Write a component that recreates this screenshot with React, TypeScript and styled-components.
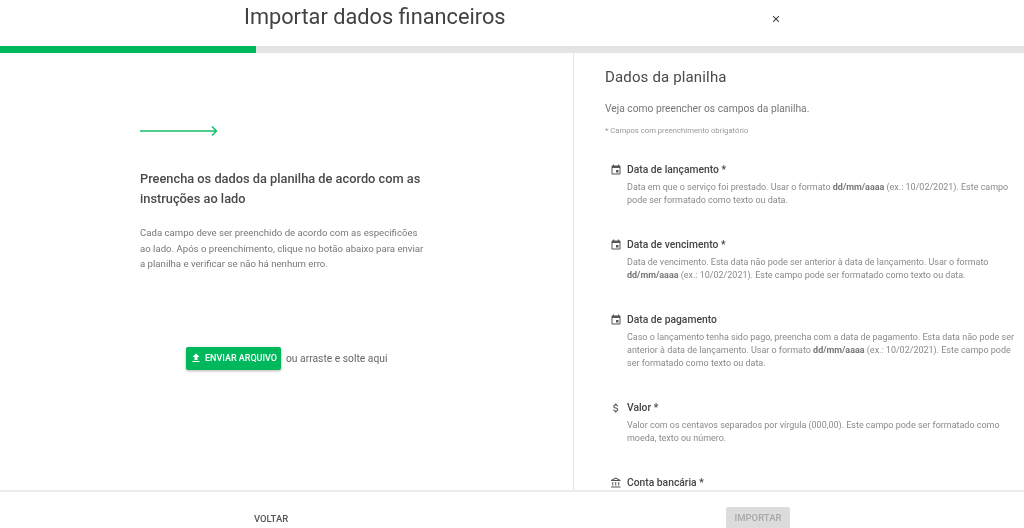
import React from 'react';
import styled, { createGlobalStyle } from 'styled-components';

const Global = createGlobalStyle`
  html, body { margin: 0; padding: 0; background: #fff; }
  body { font-family: Roboto, "Liberation Sans", sans-serif; overflow: hidden; }
  * { box-sizing: border-box; }
`;
const Page = styled.div`
  width: 1024px; height: 528px; display: flex; flex-direction: column; overflow: hidden; background: #fff;
  filter: blur(0.35px);
`;
const Header = styled.header`
  height: 46px; flex: none; display: flex; align-items: flex-start; padding-left: 244px;
`;
const Title = styled.h1`
  margin: 2px 0 0; width: 527px; font-size: 21.75px; line-height: 30px; font-weight: 400; color: #424242;
`;
const Close = styled.button`
  border: 0; background: none; padding: 0; width: 10px; height: 10px; margin-top: 14px; color: #444; display: flex;
`;
const Track = styled.div`
  height: 7px; flex: none; background: #e4e4e4;
`;
const Fill = styled.div<{ $pct: number }>`
  height: 100%; width: ${p => p.$pct}%; background: #00b85c;
`;
const Body = styled.main`
  flex: 1; min-height: 0; display: flex;
`;
const Left = styled.section`
  width: 574px; flex: none; border-right: 1px solid #e6e6e6; padding: 72px 0 0 140px;
`;
const Arrow = styled.svg`
  display: block; width: 78px; height: 12px; color: #19bd69;
`;
const Lead = styled.h2`
  margin: 32px 0 0; width: 290px; font-size: 12.82px; line-height: 20px; font-weight: 500; color: #4a4a4a;
`;
const Para = styled.p`
  margin: 16px 0 0; width: 290px; font-size: 9.62px; line-height: 15.5px; font-weight: 400; color: #777;
`;
const UploadRow = styled.div`
  display: flex; align-items: center; gap: 5px; margin: 75px 0 0 46px;
`;
const Upload = styled.button`
  width: 95px; height: 23px; border: 0; border-radius: 2px; background: #00b85c; color: #fff; display: flex; align-items: center; justify-content: center; gap: 3px;
  font: 500 9px/1 Roboto, sans-serif; box-shadow: 0 1px 3px rgba(0,0,0,.3); padding: 0;
`;
const Hint = styled.span`
  font-size: 10.3px; color: #666;
`;
const Right = styled.section`
  flex: 1; min-width: 0; padding: 14px 0 0 31px; overflow: hidden;
`;
const SheetTitle = styled.h2`
  margin: 0; font-size: 15px; line-height: 20px; font-weight: 400; color: #4a4a4a; letter-spacing: .15px;
`;
const Sub = styled.p`
  margin: 14px 0 0; font-size: 10.25px; line-height: 16px; color: #777;
`;
const Note = styled.p`
  margin: 8px 0 0; font-size: 7.7px; line-height: 12px; color: #999;
`;
const Fields = styled.div`
  margin-top: 25px; display: flex; flex-direction: column; gap: 30px; padding-left: 6px;
`;
const Field = styled.article`
  display: grid; grid-template-columns: 12px 1fr; column-gap: 4px; row-gap: 3px; width: 405px;
`;
const IconSlot = styled.svg`
  width: 12px; height: 12px; color: #555; align-self: center; margin-left: -1px;
`;
const FieldName = styled.h3`
  margin: 0; font-size: 10.3px; line-height: 16px; font-weight: 500; color: #444;
`;
const FieldText = styled.p`
  grid-column: 2; margin: 0; font-size: 8.97px; line-height: 13px; color: #8a8a8a;
  b { font-weight: 700; color: #777; }
`;
const Footer = styled.footer`
  height: 38px; flex: none; border-top: 2px solid #ececec; display: flex; align-items: center; padding: 0 0 0 254px; background: #fff;
`;
const Back = styled.button`
  border: 0; background: none; padding: 0; width: 472px; text-align: left; font: 500 9.5px/1 Roboto, sans-serif; color: #555; margin-top: 17px;
`;
const Import = styled.button`
  width: 64px; height: 22px; border: 0; border-radius: 2px; background: #dcdcdc; color: #a8a8a8; font: 500 9.5px/1 Roboto, sans-serif; padding: 0; margin-top: 15px;
`;

const paths = {
  event: 'M17 12h-5v5h5v-5zM16 1v2H8V1H6v2H5c-1.11 0-1.99.9-1.99 2L3 19c0 1.1.89 2 2 2h14c1.1 0 2-.9 2-2V5c0-1.1-.9-2-2-2h-1V1h-2zm3 18H5V8h14v11z',
  money: 'M11.8 10.9c-2.27-.59-3-1.2-3-2.15 0-1.09 1.01-1.85 2.7-1.85 1.78 0 2.44.85 2.5 2.1h2.21c-.07-1.72-1.12-3.3-3.21-3.81V3h-3v2.16c-1.94.42-3.5 1.68-3.5 3.61 0 2.31 1.91 3.46 4.7 4.13 2.5.6 3 1.48 3 2.41 0 .69-.49 1.79-2.7 1.79-2.06 0-2.87-.92-2.98-2.1h-2.2c.12 2.19 1.76 3.42 3.68 3.83V21h3v-2.15c1.95-.37 3.5-1.5 3.5-3.55 0-2.84-2.43-3.81-4.7-4.4z',
  bank: 'M6.5 10h-2v7h2v-7zm6 0h-2v7h2v-7zm8.5 9H2v2h19v-2zm-2.5-9h-2v7h2v-7zm-7-6.74L16.71 6H6.29l5.21-2.74m0-2.26L2 6v2h19V6l-9.5-5z',
};
const Icon = ({ d }: { d: string }) => (
  <IconSlot viewBox="0 0 24 24" fill="currentColor"><path d={d} /></IconSlot>
);
const F = 'dd/mm/aaaa';
const fields: { icon: string; name: string; text?: React.ReactNode }[] = [
  { icon: paths.event, name: 'Data de lançamento *', text: <>Data em que o serviço foi prestado. Usar o formato <b>{F}</b> (ex.: 10/02/2021). Este campo pode ser formatado como texto ou data.</> },
  { icon: paths.event, name: 'Data de vencimento *', text: <>Data de vencimento. Esta data não pode ser anterior à data de lançamento. Usar o formato <b>{F}</b> (ex.: 10/02/2021). Este campo pode ser formatado como texto ou data.</> },
  { icon: paths.event, name: 'Data de pagamento', text: <>Caso o lançamento tenha sido pago, preencha com a data de pagamento. Esta data não pode ser anterior à data de lançamento. Usar o formato <b>{F}</b> (ex.: 10/02/2021). Este campo pode ser formatado como texto ou data.</> },
  { icon: paths.money, name: 'Valor *', text: <>Valor com os centavos separados por vírgula (000,00). Este campo pode ser formatado como moeda, texto ou número.</> },
  { icon: paths.bank, name: 'Conta bancária *' },
];

export default function App() {
  return (
    <Page>
      <Global />
      <Header>
        <Title>Importar dados financeiros</Title>
        <Close aria-label="Fechar">
          <svg viewBox="0 0 24 24" width="10" height="10" fill="none" stroke="currentColor" strokeWidth="2.6"><path d="M5 5l14 14M19 5L5 19" /></svg>
        </Close>
      </Header>
      <Track><Fill $pct={25} /></Track>
      <Body>
        <Left>
          <Arrow viewBox="0 0 78 12" fill="none" stroke="currentColor" strokeWidth="1.5"><path d="M0 6h76.500M72 1.500l4.500 4.500-4.500 4.500" /></Arrow>
          <Lead>Preencha os dados da planilha de acordo com as instruções ao lado</Lead>
          <Para>Cada campo deve ser preenchido de acordo com as especificões ao lado. Após o preenchimento, clique no botão abaixo para enviar a planilha e verificar se não há nenhum erro.</Para>
          <UploadRow>
            <Upload>
              <svg viewBox="0 0 24 24" width="12" height="12" fill="currentColor"><path d="M5 20h14v-2H5v2zm0-10h4v6h6v-6h4l-7-7-7 7z" /></svg>
              ENVIAR ARQUIVO
            </Upload>
            <Hint>ou arraste e solte aqui</Hint>
          </UploadRow>
        </Left>
        <Right>
          <SheetTitle>Dados da planilha</SheetTitle>
          <Sub>Veja como preencher os campos da planilha.</Sub>
          <Note>* Campos com preenchimento obrigatório</Note>
          <Fields>
            {fields.map(f => (
              <Field key={f.name}>
                <Icon d={f.icon} />
                <FieldName>{f.name}</FieldName>
                {f.text && <FieldText>{f.text}</FieldText>}
              </Field>
            ))}
          </Fields>
        </Right>
      </Body>
      <Footer>
        <Back>VOLTAR</Back>
        <Import disabled>IMPORTAR</Import>
      </Footer>
    </Page>
  );
}
